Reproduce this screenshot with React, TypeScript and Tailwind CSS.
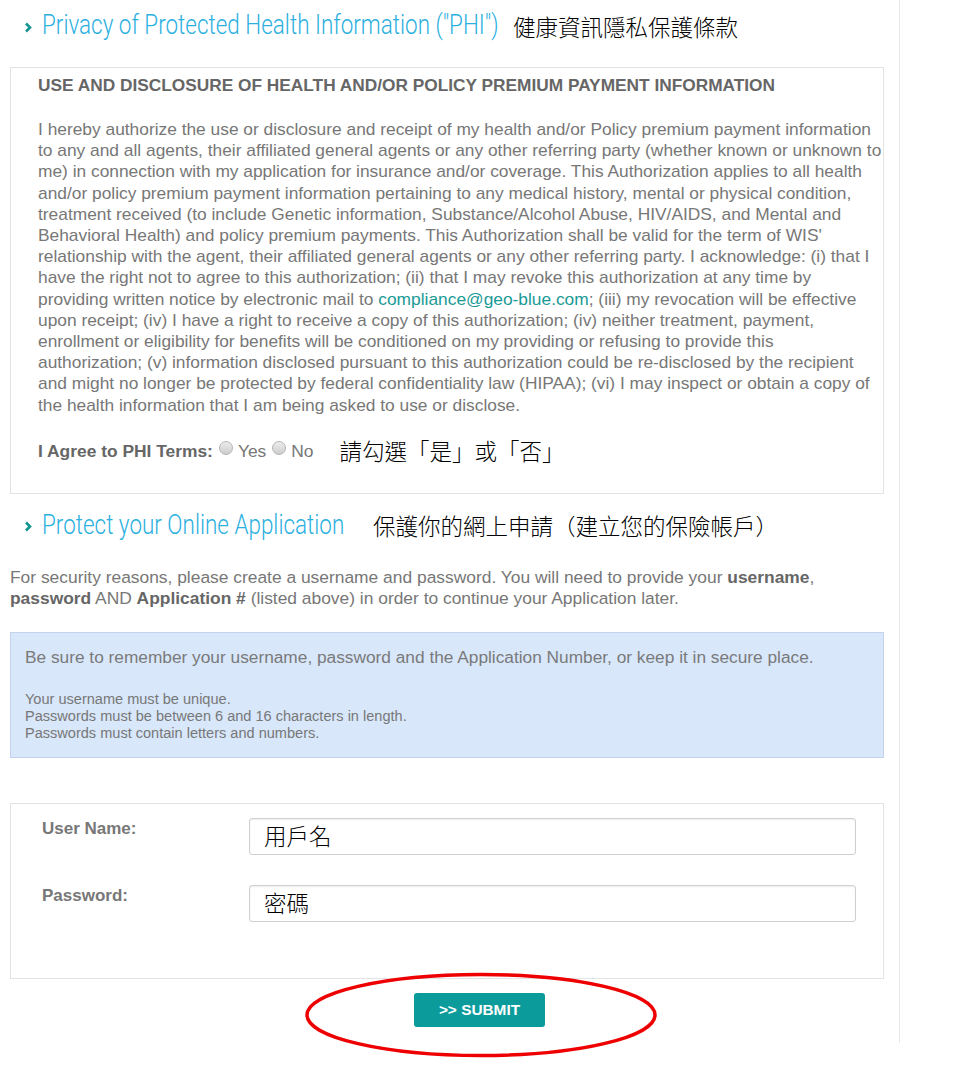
import React from 'react';

const sans = "font-['Liberation_Sans',Arial,sans-serif]";
const cjk = "font-['Noto_Sans_CJK_TC','Noto_Sans_CJK_SC',sans-serif]";

function Chevron() {
  return (
    <svg width="8" height="11" viewBox="0 0 8 11" className="mr-[10px] mt-[2px]">
      <polyline points="2,1.5 6,5.5 2,9.5" fill="none" stroke="#12958f" strokeWidth="2.6" />
    </svg>
  );
}

function SectionTitle({ title, note, width, gap }: { title: string; note: string; width: string; gap: string }) {
  return (
    <div className="flex items-center pl-[24px] h-[52px]">
      <Chevron />
      <div className={`${width} whitespace-nowrap`}>
        <h2 className="inline-block origin-left scale-x-[0.802] font-['Roboto',sans-serif] font-light text-[#2bb0e0] text-[28px] leading-none">
          {title}
        </h2>
      </div>
      <span className={`${cjk} font-light text-black text-[22.5px] leading-none whitespace-nowrap ${gap}`}>{note}</span>
    </div>
  );
}

function Radio({ label }: { label: string }) {
  return (
    <span className="inline-flex items-center">
      <span className="inline-block w-[14px] h-[14px] rounded-full border border-[#b5b5b5] bg-gradient-to-b from-[#ececec] to-[#cdcdcd] mr-[5px] -mt-[5px]" />
      <span className="mr-[6px]">{label}</span>
    </span>
  );
}

export default function App() {
  return (
    <div className={`w-[964px] min-h-[1068px] bg-white ${sans}`}>
      <div className="relative w-[900px] border-r border-[#e6e6e6]">
        <div className="w-[874px] ml-[10px]">
          <div className="-ml-[10px]">
            <SectionTitle title={'Privacy of Protected Health Information ("PHI")'} note="健康資訊隱私保護條款" width="w-[455px]" gap="ml-[16px]" />
          </div>

          <div className="mt-[15px] border border-[#e3e3e3] pl-[27px] pr-[6px] pt-[7px] pb-[25px]">
            <h3 className="text-[#666] font-bold text-[17.3px] leading-[20px] whitespace-nowrap">
              USE AND DISCLOSURE OF HEALTH AND/OR POLICY PREMIUM PAYMENT INFORMATION
            </h3>
            <p className="mt-[24px] text-[#777] text-[17.35px] leading-[21.2px] whitespace-nowrap">
              I hereby authorize the use or disclosure and receipt of my health and/or Policy premium payment information<br />
              to any and all agents, their affiliated general agents or any other referring party (whether known or unknown to<br />
              me) in connection with my application for insurance and/or coverage. This Authorization applies to all health<br />
              and/or policy premium payment information pertaining to any medical history, mental or physical condition,<br />
              treatment received (to include Genetic information, Substance/Alcohol Abuse, HIV/AIDS, and Mental and<br />
              Behavioral Health) and policy premium payments. This Authorization shall be valid for the term of WIS'<br />
              relationship with the agent, their affiliated general agents or any other referring party. I acknowledge: (i) that I<br />
              have the right not to agree to this authorization; (ii) that I may revoke this authorization at any time by<br />
              providing written notice by electronic mail to <span className="text-[#1a9a96]">compliance@geo-blue.com</span>; (iii) my revocation will be effective<br />
              upon receipt; (iv) I have a right to receive a copy of this authorization; (iv) neither treatment, payment,<br />
              enrollment or eligibility for benefits will be conditioned on my providing or refusing to provide this<br />
              authorization; (v) information disclosed pursuant to this authorization could be re-disclosed by the recipient<br />
              and might no longer be protected by federal confidentiality law (HIPAA); (vi) I may inspect or obtain a copy of<br />
              the health information that I am being asked to use or disclose.
            </p>
            <div className="mt-[18px] flex items-center text-[17.4px] text-[#777]">
              <span className="font-bold text-[#666] mr-[6px]">I Agree to PHI Terms:</span>
              <Radio label="Yes" />
              <Radio label="No" />
              <span className={`${cjk} font-light text-black text-[22.5px] ml-[20px]`}>請勾選「是」或「否」</span>
            </div>
          </div>

          <div className="mt-[6px] -ml-[10px]">
            <SectionTitle title="Protect your Online Application" note="保護你的網上申請（建立您的保險帳戶）" width="w-[302px]" gap="ml-[29px]" />
          </div>

          <p className="mt-[15px] text-[17.4px] leading-[21px] text-[#777] whitespace-nowrap">
            For security reasons, please create a username and password. You will need to provide your <b className="text-[#666]">username</b>,<br />
            <b className="text-[#666]">password</b> AND <b className="text-[#666]">Application #</b> (listed above) in order to continue your Application later.
          </p>

          <div className="mt-[23px] bg-[#d8e7fa] border border-[#c3d3ee] pl-[14px] pt-[14px] pb-[15px]">
            <p className="text-[17.3px] leading-[20px] text-[#7a7a7a]">
              Be sure to remember your username, password and the Application Number, or keep it in secure place.
            </p>
            <div className="mt-[24px] text-[14.55px] leading-[17px] text-[#777]">
              <div>Your username must be unique.</div>
              <div>Passwords must be between 6 and 16 characters in length.</div>
              <div>Passwords must contain letters and numbers.</div>
            </div>
          </div>

          <div className="mt-[45px] border border-[#e3e3e3] pl-[31px] pr-[27px] pt-[14px] pb-[56px]">
            <div className="flex items-start">
              <label className="w-[207px] -mt-[2px] font-bold text-[17px] text-[#777]">User Name:</label>
              <div className={`flex-1 h-[37px] border border-[#d0d0d0] rounded-[3px] shadow-[inset_0_1px_2px_rgba(0,0,0,0.08)] pl-[14px] flex items-center ${cjk} font-light text-[22.5px] text-black`}>
                用戶名
              </div>
            </div>
            <div className="flex items-start mt-[30px]">
              <label className="w-[207px] -mt-[2px] font-bold text-[17px] text-[#777]">Password:</label>
              <div className={`flex-1 h-[37px] border border-[#d0d0d0] rounded-[3px] shadow-[inset_0_1px_2px_rgba(0,0,0,0.08)] pl-[14px] flex items-center ${cjk} font-light text-[22.5px] text-black`}>
                密碼
              </div>
            </div>
          </div>

          <div className="relative flex justify-center pl-[65px] mt-[14px] h-[50px]">
            <button className="w-[131px] h-[34px] bg-[#0b9b9b] rounded-[3px] text-white font-bold text-[15.4px]">
              &gt;&gt; SUBMIT
            </button>
            <svg className="absolute left-[294px] -top-[21px]" width="354" height="86" viewBox="0 0 354 86">
              <ellipse cx="177" cy="43" rx="174" ry="40.5" fill="none" stroke="#ee0000" strokeWidth="3.5" />
            </svg>
          </div>
        </div>
      </div>
    </div>
  );
}
